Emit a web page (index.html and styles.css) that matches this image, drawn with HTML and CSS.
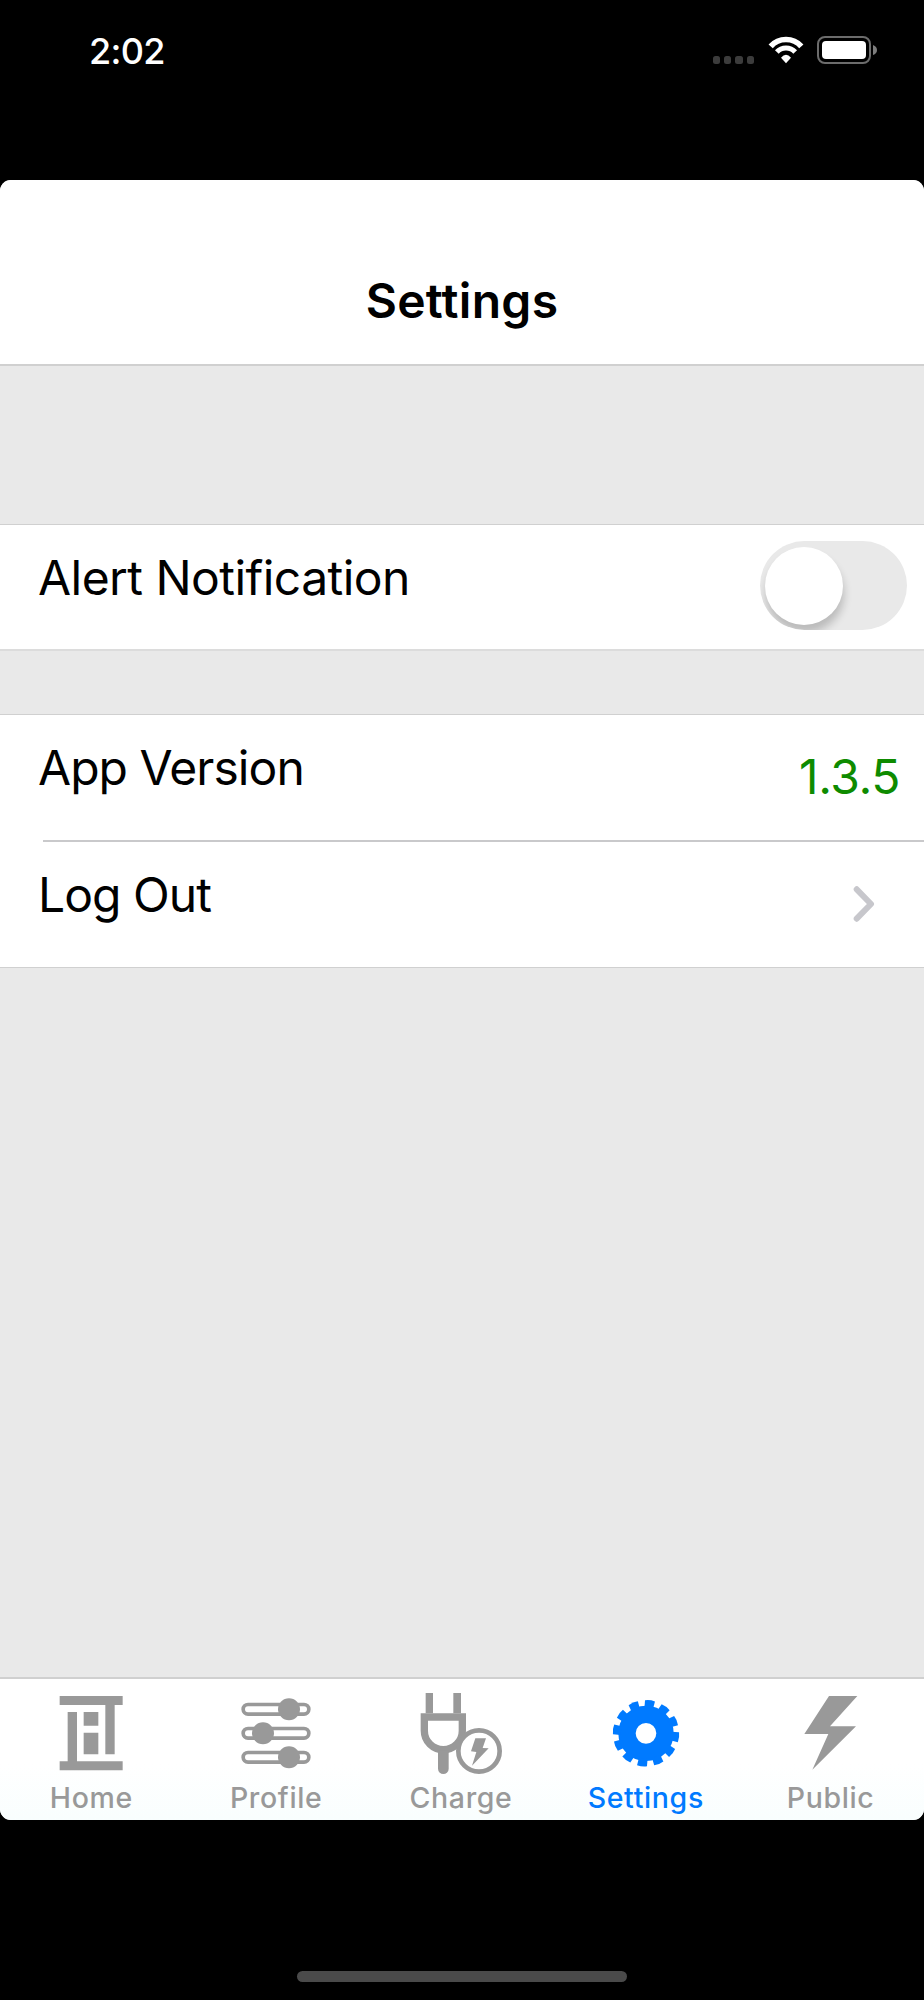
FILE: index.html
```html
<!DOCTYPE html>
<html lang="en">
<head>
<meta charset="utf-8">
<title>Settings</title>
<link rel="stylesheet" href="styles.css">
</head>
<body>
<div class="phone">
  <header class="status">
    <span class="time">2:02</span>
    <div class="indicators">
      <div class="dots"><i></i><i></i><i></i><i></i></div>
      <svg class="wifi" viewBox="231 78 108 84" fill="none" stroke="#fff">
        <path d="M239 109A62 62 0 0 1 331 109" stroke-width="17"/>
        <path d="M257.500 126A37 37 0 0 1 312.500 126" stroke-width="15"/>
        <path d="M270 143Q285 126 300 143L285 160Z" fill="#fff" stroke="none"/>
      </svg>
      <div class="battery"><div class="level"></div></div>
      <svg class="cap" viewBox="0 0 4 10"><path d="M0 0Q4 1.500 4 5T0 10Z" fill="#7d7d7d"/></svg>
    </div>
  </header>

  <main class="app">
    <h1 class="title">Settings</h1>
    <div class="content">
      <section class="group alerts">
        <div class="row">
          <span class="label alert">Alert Notification</span>
          <div class="toggle"><div class="knob"></div></div>
        </div>
      </section>
      <section class="group">
        <div class="row">
          <span class="label">App Version</span>
          <span class="version">1.3.5</span>
        </div>
        <div class="divider"></div>
        <div class="row">
          <span class="label">Log Out</span>
          <svg class="chevron" viewBox="0 0 22 36"><path d="M3.700 3.300L18 18L3.700 32.700" fill="none" stroke="#c7c7cc" stroke-width="6" stroke-linecap="round" stroke-linejoin="round"/></svg>
        </div>
      </section>
    </div>

    <nav class="tabs">
      <a class="tab">
        <svg viewBox="0 0 300 300"><path d="M53 51H242V78H218V226H190V78H53ZM77 99H105V247H242V274H53V247H77ZM125 99H169V140H125ZM125 161H169V226H125Z"/></svg>
        <span>Home</span>
      </a>
      <a class="tab">
        <svg viewBox="0 0 300 300">
          <g fill="none" stroke="#999" stroke-width="11"><rect x="48.500" y="76.500" width="197" height="29" rx="14.500"/><rect x="48.500" y="148.500" width="197" height="29" rx="14.500"/><rect x="48.500" y="220.500" width="197" height="29" rx="14.500"/></g>
          <circle cx="186" cy="91" r="33"/><circle cx="108" cy="163" r="33"/><circle cx="186" cy="235" r="33"/>
        </svg>
        <span>Profile</span>
      </a>
      <a class="tab">
        <svg viewBox="0 0 300 300">
          <path d="M41 42H63V103H41ZM124 42H147V103H124Z"/>
          <path d="M37 114H151V155A57 57 0 0 1 37 155Z" fill="none" stroke="#999" stroke-width="22"/>
          <path d="M78 215H110V269A16 16 0 0 1 78 269Z"/>
          <circle cx="201" cy="216" r="62" fill="#fff" stroke="#999" stroke-width="14"/>
          <path d="M190 178H222L212 207L230 208L180 260L193 219L177 217Z"/>
        </svg>
        <span>Charge</span>
      </a>
      <a class="tab active">
        <svg viewBox="0 0 300 300">
          <defs><path id="tooth" d="M-14 -75L-15 -98Q0 -102 15 -98L12 -75Z"/></defs>
          <circle cx="147" cy="163" r="57" fill="none" stroke="#007aff" stroke-width="52"/>
          <g fill="#007aff" transform="translate(147 163) rotate(7)">
            <use href="#tooth"/><use href="#tooth" transform="rotate(30)"/><use href="#tooth" transform="rotate(60)"/><use href="#tooth" transform="rotate(90)"/>
            <use href="#tooth" transform="rotate(120)"/><use href="#tooth" transform="rotate(150)"/><use href="#tooth" transform="rotate(180)"/><use href="#tooth" transform="rotate(210)"/>
            <use href="#tooth" transform="rotate(240)"/><use href="#tooth" transform="rotate(270)"/><use href="#tooth" transform="rotate(300)"/><use href="#tooth" transform="rotate(330)"/>
          </g>
        </svg>
        <span>Settings</span>
      </a>
      <a class="tab">
        <svg viewBox="0 0 300 300"><path d="M141 51H226L144 142H222L91 272L139 165H67Z"/></svg>
        <span>Public</span>
      </a>
    </nav>
  </main>
  <footer class="bottom"><div class="home-bar"></div></footer>
</div>
</body>
</html>
```

FILE: styles.css
```css
* { box-sizing: border-box; }
body { margin: 0; background: #000; font-family: Inter, "Liberation Sans", sans-serif; }
.phone { width: 924px; height: 2000px; display: flex; flex-direction: column; background: #000; }

.status { height: 180px; display: flex; justify-content: space-between; align-items: flex-start; padding: 30px 47px 0 89px; color: #fff; }
.time { font-size: 36px; font-weight: 500; line-height: 42px; letter-spacing: -0.700px; }
.indicators { display: flex; align-items: flex-start; padding-top: 6px; }
.dots { display: flex; gap: 4px; padding: 20px 14px 0 0; }
.dots i { width: 7.300px; height: 7.500px; border-radius: 2.500px; background: #3c3c3c; }
.wifi { width: 36px; height: 28px; margin-right: 13px; }
.battery { width: 54px; height: 28px; padding: 3px; border: 2px solid #6c6c6c; border-radius: 8px; }
.level { height: 100%; border-radius: 4px; background: #fff; }
.cap { width: 4px; height: 10px; margin: 9px 0 0 2px; }

.app { height: 1640px; display: flex; flex-direction: column; background: #e9e9e9; border-radius: 11px; overflow: hidden; }
.title { height: 186px; margin: 0; padding-top: 91px; background: #fff; border-bottom: 2px solid #d0d0d0; font-size: 48px; font-weight: 600; line-height: 60px; text-align: center; letter-spacing: 0.300px; }
.content { flex: 1; display: flex; flex-direction: column; gap: 63px; padding-top: 158px; }
.group { background: #fff; border-top: 1px solid #d0d0d0; border-bottom: 1px solid #d0d0d0; }
.alerts { border-bottom: 2px solid #dcdcdc; }
.row { height: 125px; display: flex; justify-content: space-between; align-items: flex-start; padding-left: 38px; font-size: 48px; line-height: 60px; }
.alerts .row { height: 124px; }
.label { padding-top: 23px; letter-spacing: -0.950px; }
.label.alert { letter-spacing: -0.550px; }
.toggle { width: 147px; height: 89px; margin: 16px 17.500px 0 0; padding: 5.500px; border-radius: 45px; background: #e9e9e9; overflow: hidden; }
.knob { width: 78px; height: 78px; border-radius: 50%; background: #fff; box-shadow: 1px 8px 9px rgba(0, 0, 0, 0.200); }
.version { padding: 32px 24px 0 0; color: #0e8b00; letter-spacing: -0.400px; }
.divider { height: 2px; margin-left: 43px; background: #c9c9cb; }
.chevron { width: 22px; height: 36px; margin: 44px 49px 0 0; }

.tabs { height: 143px; display: flex; border-top: 2px solid #d0d0d0; background: linear-gradient(#fff 60%, #f9fefe); }
.tab { flex: 1; display: flex; flex-direction: column; align-items: center; color: #999; font-size: 28.500px; font-weight: 500; line-height: 38px; letter-spacing: 0.650px; }
.tab span { margin-right: 2px; }
.tab svg { width: 100px; height: 100px; fill: #999; }
.tab.active { color: #007aff; }

.bottom { height: 180px; display: flex; justify-content: center; align-items: flex-end; padding-bottom: 18px; }
.home-bar { width: 330px; height: 11px; border-radius: 6px; background: #4a4a4a; }
```
